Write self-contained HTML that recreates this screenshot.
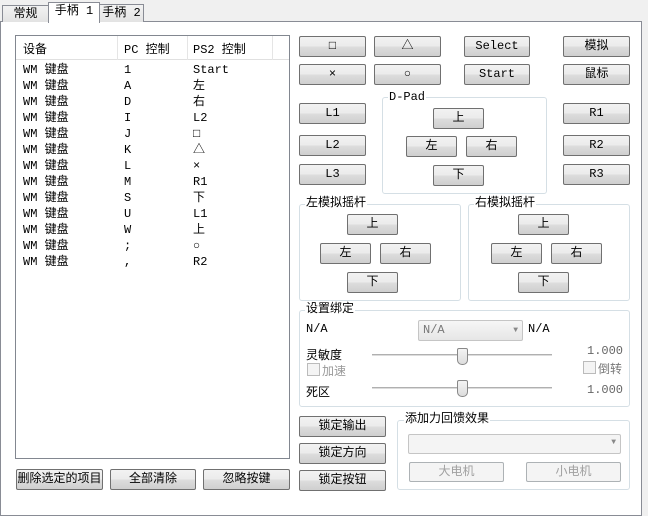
<!DOCTYPE html>
<html><head><meta charset="utf-8"><style>
*{box-sizing:border-box;margin:0;padding:0}
body{width:648px;height:510px;background:#f0f0f0;position:relative;overflow:hidden;font-family:"Liberation Mono","Noto Sans CJK SC",monospace;font-size:12px;color:#000}
.a{position:absolute}
.tab{position:absolute;border:1px solid #898c95;border-bottom:none;background:linear-gradient(#f2f2f2,#e3e3e3);text-align:center;line-height:16px}
.panel{position:absolute;left:0;top:21px;width:642px;height:495px;border:1px solid #898c95;background:#fff}
.btn{position:absolute;border:1px solid #707070;border-radius:2px;background:linear-gradient(#f2f2f2 0%,#ebebeb 50%,#dddddd 51%,#cfcfcf 100%);text-align:center;line-height:18px;font-size:12px}
.grp{position:absolute;border:1px solid #d5dfe5;border-radius:3px}
.gl{position:absolute;background:#fff;padding:0 1px;line-height:12px;font-size:12px}
.list{position:absolute;left:15px;top:35px;width:275px;height:424px;border:1px solid #828790;background:#fff}
.hdr{position:absolute;left:0;top:0;width:273px;height:24px;border-bottom:1px solid #e0e0e0;background:#fff}
.row{position:absolute;left:0;height:16px;line-height:16px;width:273px}
.row span{position:absolute}
.dis{color:#a0a0a0;border-color:#adb2b5;background:#f4f4f4}
</style></head><body>
<div class="panel"></div>
<div class="tab" style="left:2px;top:5px;width:47px;height:17px;">常规</div>
<div class="tab" style="left:99px;top:4px;width:45px;height:18px;">手柄 2</div>
<div class="tab" style="left:48px;top:2px;width:52px;height:21px;background:#fff;border-bottom:none;">手柄 1</div>

<div class="list">
 <div class="hdr">
  <span class="a" style="left:7px;top:4px">设备</span>
  <span class="a" style="left:108px;top:4px">PC 控制</span>
  <span class="a" style="left:177px;top:4px">PS2 控制</span>
  <div class="a" style="left:101px;top:0;width:1px;height:24px;background:#e5e5e5"></div>
  <div class="a" style="left:171px;top:0;width:1px;height:24px;background:#e5e5e5"></div>
  <div class="a" style="left:256px;top:0;width:1px;height:24px;background:#e5e5e5"></div>
 </div>
 <div class="row" style="top:26px"><span style="left:7px">WM 键盘</span><span style="left:108px">1</span><span style="left:177px">Start</span></div>
 <div class="row" style="top:42px"><span style="left:7px">WM 键盘</span><span style="left:108px">A</span><span style="left:177px">左</span></div>
 <div class="row" style="top:58px"><span style="left:7px">WM 键盘</span><span style="left:108px">D</span><span style="left:177px">右</span></div>
 <div class="row" style="top:74px"><span style="left:7px">WM 键盘</span><span style="left:108px">I</span><span style="left:177px">L2</span></div>
 <div class="row" style="top:90px"><span style="left:7px">WM 键盘</span><span style="left:108px">J</span><span style="left:177px">□</span></div>
 <div class="row" style="top:106px"><span style="left:7px">WM 键盘</span><span style="left:108px">K</span><span style="left:177px">△</span></div>
 <div class="row" style="top:122px"><span style="left:7px">WM 键盘</span><span style="left:108px">L</span><span style="left:177px">×</span></div>
 <div class="row" style="top:138px"><span style="left:7px">WM 键盘</span><span style="left:108px">M</span><span style="left:177px">R1</span></div>
 <div class="row" style="top:154px"><span style="left:7px">WM 键盘</span><span style="left:108px">S</span><span style="left:177px">下</span></div>
 <div class="row" style="top:170px"><span style="left:7px">WM 键盘</span><span style="left:108px">U</span><span style="left:177px">L1</span></div>
 <div class="row" style="top:186px"><span style="left:7px">WM 键盘</span><span style="left:108px">W</span><span style="left:177px">上</span></div>
 <div class="row" style="top:202px"><span style="left:7px">WM 键盘</span><span style="left:108px">;</span><span style="left:177px">○</span></div>
 <div class="row" style="top:218px"><span style="left:7px">WM 键盘</span><span style="left:108px">,</span><span style="left:177px">R2</span></div>
</div>

<div class="btn" style="left:16px;top:469px;width:87px;height:21px">删除选定的项目</div>
<div class="btn" style="left:110px;top:469px;width:86px;height:21px">全部清除</div>
<div class="btn" style="left:203px;top:469px;width:87px;height:21px">忽略按键</div>

<div class="btn" style="left:299px;top:36px;width:67px;height:21px">□</div>
<div class="btn" style="left:374px;top:36px;width:67px;height:21px">△</div>
<div class="btn" style="left:464px;top:36px;width:66px;height:21px">Select</div>
<div class="btn" style="left:563px;top:36px;width:67px;height:21px">模拟</div>
<div class="btn" style="left:299px;top:64px;width:67px;height:21px">×</div>
<div class="btn" style="left:374px;top:64px;width:67px;height:21px">○</div>
<div class="btn" style="left:464px;top:64px;width:66px;height:21px">Start</div>
<div class="btn" style="left:563px;top:64px;width:67px;height:21px">鼠标</div>

<div class="btn" style="left:299px;top:103px;width:67px;height:21px">L1</div>
<div class="btn" style="left:299px;top:135px;width:67px;height:21px">L2</div>
<div class="btn" style="left:299px;top:164px;width:67px;height:21px">L3</div>
<div class="btn" style="left:563px;top:103px;width:67px;height:21px">R1</div>
<div class="btn" style="left:563px;top:135px;width:67px;height:21px">R2</div>
<div class="btn" style="left:563px;top:164px;width:67px;height:21px">R3</div>

<div class="grp" style="left:382px;top:97px;width:165px;height:97px"></div>
<div class="gl" style="left:388px;top:91px">D-Pad</div>
<div class="btn" style="left:433px;top:108px;width:51px;height:21px">上</div>
<div class="btn" style="left:406px;top:136px;width:51px;height:21px">左</div>
<div class="btn" style="left:466px;top:136px;width:51px;height:21px">右</div>
<div class="btn" style="left:433px;top:165px;width:51px;height:21px">下</div>

<div class="grp" style="left:299px;top:204px;width:162px;height:97px"></div>
<div class="gl" style="left:305px;top:197px">左模拟摇杆</div>
<div class="btn" style="left:347px;top:214px;width:51px;height:21px">上</div>
<div class="btn" style="left:320px;top:243px;width:51px;height:21px">左</div>
<div class="btn" style="left:380px;top:243px;width:51px;height:21px">右</div>
<div class="btn" style="left:347px;top:272px;width:51px;height:21px">下</div>

<div class="grp" style="left:468px;top:204px;width:162px;height:97px"></div>
<div class="gl" style="left:474px;top:197px">右模拟摇杆</div>
<div class="btn" style="left:518px;top:214px;width:51px;height:21px">上</div>
<div class="btn" style="left:491px;top:243px;width:51px;height:21px">左</div>
<div class="btn" style="left:551px;top:243px;width:51px;height:21px">右</div>
<div class="btn" style="left:518px;top:272px;width:51px;height:21px">下</div>

<div class="grp" style="left:299px;top:310px;width:331px;height:97px"></div>
<div class="gl" style="left:305px;top:303px">设置绑定</div>
<div class="a" style="left:306px;top:322px">N/A</div>
<div class="a" style="left:418px;top:320px;width:105px;height:21px;border:1px solid #c5c5c5;border-radius:2px;background:linear-gradient(#f6f6f6,#e6e6e6);color:#777;line-height:19px;padding-left:4px">N/A<span class="a" style="right:4px;top:0;font-size:8px;color:#888">▼</span></div>
<div class="a" style="left:528px;top:322px">N/A</div>
<div class="a" style="left:306px;top:346px">灵敏度</div>
<div class="a" style="left:372px;top:354px;width:180px;height:2px;background:#dcdcdc;border-top:1px solid #b0b0b0"></div>
<div class="a" style="left:457px;top:348px;width:11px;height:17px;border:1px solid #888;border-radius:2px 2px 5px 5px;background:linear-gradient(#f4f4f4,#ddd)"></div>
<div class="a" style="left:587px;top:344px;color:#666">1.000</div>
<div class="a" style="left:307px;top:363px;width:13px;height:13px;border:1px solid #bbb;background:#f4f4f4"></div>
<div class="a" style="left:322px;top:362px;color:#999">加速</div>
<div class="a" style="left:583px;top:361px;width:13px;height:13px;border:1px solid #bbb;background:#f4f4f4"></div>
<div class="a" style="left:598px;top:360px;color:#777">倒转</div>
<div class="a" style="left:306px;top:383px">死区</div>
<div class="a" style="left:372px;top:387px;width:180px;height:2px;background:#dcdcdc;border-top:1px solid #b0b0b0"></div>
<div class="a" style="left:457px;top:380px;width:11px;height:17px;border:1px solid #888;border-radius:2px 2px 5px 5px;background:linear-gradient(#f4f4f4,#ddd)"></div>
<div class="a" style="left:587px;top:383px;color:#666">1.000</div>

<div class="btn" style="left:299px;top:416px;width:87px;height:21px">锁定输出</div>
<div class="btn" style="left:299px;top:443px;width:87px;height:21px">锁定方向</div>
<div class="btn" style="left:299px;top:470px;width:87px;height:21px">锁定按钮</div>

<div class="grp" style="left:397px;top:420px;width:233px;height:70px"></div>
<div class="gl" style="left:404px;top:413px">添加力回馈效果</div>
<div class="a" style="left:408px;top:434px;width:213px;height:20px;border:1px solid #c5c5c5;border-radius:2px;background:#f4f4f4"><span class="a" style="right:4px;top:3px;font-size:8px;color:#888">▼</span></div>
<div class="btn dis" style="left:409px;top:462px;width:95px;height:20px">大电机</div>
<div class="btn dis" style="left:526px;top:462px;width:95px;height:20px">小电机</div>
</body></html>
